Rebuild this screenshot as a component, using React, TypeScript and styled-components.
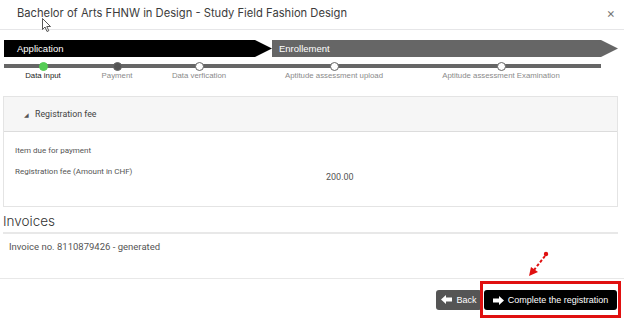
import React from 'react';
import styled, {createGlobalStyle} from "styled-components";

const GlobalStyle = createGlobalStyle`
  body {
    margin: 0;
    background: #ffffff;
    font-family: Inter, "Noto Sans", sans-serif;
  }
`

const steps = [
    {label: 'Data input', width: 78, state: 'done'},
    {label: 'Payment', width: 70, state: 'filled'},
    {label: 'Data verfication', width: 94, state: 'open'},
    {label: 'Aptitude assessment upload', width: 176, state: 'open'},
    {label: 'Aptitude assessment Examination', width: 158, state: 'open'},
];

type DotState = 'done' | 'filled' | 'open';

export default function App() {
    return (
        <Page>
            <GlobalStyle/>
            <Header>
                <Title>Bachelor of Arts FHNW in Design - Study Field Fashion Design</Title>
                <Close>×</Close>
            </Header>
            <Content>
                <PhaseBar>
                    <Phase $bg="#000000" $width={268}>Application</Phase>
                    <Phase $bg="#666666" $width={346}>Enrollement</Phase>
                </PhaseBar>
                <Stepper>
                    {steps.map((s, i) => (
                        <Step key={s.label} $width={s.width}>
                            <Dot $state={s.state as DotState}/>
                            <StepLabel $active={i === 0}>{s.label}</StepLabel>
                        </Step>
                    ))}
                </Stepper>
                <Panel>
                    <PanelHeader>
                        <Caret>◢</Caret>
                        Registration fee
                    </PanelHeader>
                    <PanelBody>
                        <Line>Item due for payment</Line>
                        <FeeRow>
                            <Line>Registration fee (Amount in CHF)</Line>
                            <Amount>200.00</Amount>
                        </FeeRow>
                    </PanelBody>
                </Panel>
                <SectionTitle>Invoices</SectionTitle>
                <InvoiceLine>Invoice no. 8110879426 - generated</InvoiceLine>
            </Content>
            <Footer>
                <Button $bg="#555555" $width={46}>
                    <svg width="11" height="9" viewBox="0 0 11 9">
                        <polygon points="0,4.5 5,0 5,2.5 11,2.5 11,6.5 5,6.5 5,9" fill="#fff"/>
                    </svg>
                    Back
                </Button>
                <Highlight>
                    <Button $bg="#000000" $width={133}>
                        <svg width="11" height="9" viewBox="0 0 11 9">
                            <polygon points="11,4.5 6,0 6,2.5 0,2.5 0,6.5 6,6.5 6,9" fill="#fff"/>
                        </svg>
                        Complete the registration
                    </Button>
                </Highlight>
            </Footer>
            <Pointer width="30" height="30" viewBox="0 0 30 30">
                <circle cx="22" cy="6" r="2.2" fill="#e01010"/>
                <line x1="21" y1="8" x2="10" y2="22" stroke="#e01010" strokeWidth="2" strokeDasharray="3 2"/>
                <polygon points="5,28 7,19 14,24" fill="#e01010"/>
            </Pointer>
            <Cursor width="10" height="15" viewBox="0 0 10 15">
                <path d="M0.5 0.5 L0.5 11.5 L3 9 L5 13.5 L6.8 12.7 L4.8 8.5 L8.5 8.5 Z" fill="#fff" stroke="#444" strokeWidth="0.9"/>
            </Cursor>
        </Page>
    );
}

const Page = styled.div`
  position: relative;
  width: 624px;
  height: 320px;
  overflow: hidden;
  display: flex;
  flex-direction: column;
  background: #ffffff;
`
const Header = styled.div`
  height: 30px;
  border-bottom: 1px solid #e6e6e8;
  display: flex;
  align-items: center;
  justify-content: space-between;
  padding: 0 9px 4px 17px;
  box-sizing: border-box;
`
const Title = styled.div`
  font-size: 11.2px;
  color: #3c3c3c;
`
const Close = styled.div`
  font-size: 13px;
  color: #777777;
`
const Content = styled.div`
  padding: 0 6px 0 3px;
`
const PhaseBar = styled.div`
  display: flex;
  margin: 10px 0 0 1px;
  height: 17px;
`
const Phase = styled.div<{ $bg: string; $width: number }>`
  width: ${p => p.$width}px;
  background: ${p => p.$bg};
  color: #ffffff;
  font: 9.5px "Liberation Sans", Arial, sans-serif;
  display: flex;
  align-items: center;
  padding-left: 13px;
  box-sizing: border-box;
  clip-path: polygon(0 0, calc(100% - 17px) 0, 100% 50%, calc(100% - 17px) 100%, 0 100%);
  &:last-child {
    padding-left: 7px;
  }
`
const Stepper = styled.div`
  position: relative;
  display: flex;
  padding: 5px 0 0 1px;
  height: 27px;
  box-sizing: border-box;
  &::before {
    content: "";
    position: absolute;
    left: 1px;
    top: 7px;
    width: 597px;
    height: 4px;
    background: #666666;
  }
`
const Step = styled.div<{ $width: number }>`
  position: relative;
  width: ${p => p.$width}px;
  display: flex;
  flex-direction: column;
  align-items: center;
`
const Dot = styled.div<{ $state: DotState }>`
  width: 9px;
  height: 9px;
  border-radius: 50%;
  box-sizing: border-box;
  background: ${p => p.$state === 'done' ? '#55cc55' : p.$state === 'filled' ? '#555555' : '#ffffff'};
  border: 1px solid ${p => p.$state === 'done' ? '#55cc55' : '#666666'};
`
const StepLabel = styled.div<{ $active: boolean }>`
  font: 7.8px/10px "Liberation Sans", Arial, sans-serif;
  color: ${p => p.$active ? '#222222' : '#8a8a8a'};
  white-space: nowrap;
`
const Panel = styled.div`
  margin-top: 12px;
  border: 1px solid #e4e4e4;
`
const PanelHeader = styled.div`
  height: 34px;
  background: #f6f6f6;
  border-bottom: 1px solid #dcdcdc;
  display: flex;
  align-items: center;
  padding-left: 20px;
  font: 8.8px Roboto, sans-serif;
  color: #444444;
`
const Caret = styled.span`
  font-size: 6px;
  margin-right: 6px;
  color: #555555;
`
const PanelBody = styled.div`
  padding: 13px 11px 23px;
`
const Line = styled.div`
  font: 8px/12px Roboto, sans-serif;
  color: #555555;
`
const FeeRow = styled.div`
  display: grid;
  grid-template-columns: 311px 1fr;
  margin-top: 9px;
`
const Amount = styled(Line)`
  padding-top: 5px;
  font-size: 9px;
`
const SectionTitle = styled.div`
  margin-top: 6px;
  font-size: 13.5px;
  font-weight: 300;
  line-height: 16px;
  color: #333333;
  padding-bottom: 3px;
  border-bottom: 2px solid #e8e8e8;
`
const InvoiceLine = styled.div`
  margin-top: 7px;
  padding-left: 6px;
  font: 9.5px/12px Roboto, sans-serif;
  color: #555555;
`
const Footer = styled.div`
  margin-top: auto;
  border-top: 1px solid #e8e8e8;
  display: flex;
  justify-content: flex-end;
  align-items: center;
  padding: 2px 3px 2px 0;
`
const Button = styled.div<{ $bg: string; $width: number }>`
  width: ${p => p.$width}px;
  height: 20px;
  background: ${p => p.$bg};
  border-radius: 3px;
  color: #ffffff;
  font: 9px "Liberation Sans", Arial, sans-serif;
  display: flex;
  align-items: center;
  justify-content: center;
  gap: 4px;
  box-sizing: border-box;
`
const Highlight = styled.div`
  border: 3px solid #e01010;
  padding: 6px 1px 5px;
  margin-left: -2px;
`
const Pointer = styled.svg`
  position: absolute;
  left: 524px;
  top: 248px;
`
const Cursor = styled.svg`
  position: absolute;
  left: 42px;
  top: 18px;
`
